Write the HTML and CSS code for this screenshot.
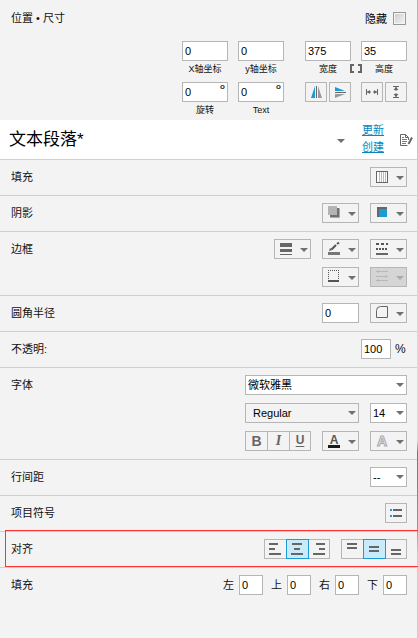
FILE: index.html
```html
<!DOCTYPE html>
<html lang="zh-CN">
<head>
<meta charset="utf-8">
<title>属性</title>
<link rel="stylesheet" href="styles.css">
</head>
<body>
<main class="panel">
  <section class="geometry">
    <header class="geometry-head"><span>位置 • 尺寸</span><label class="hide"><span>隐藏</span><i class="check"></i></label></header>
    <div class="geometry-grid">
      <div class="field"><div class="input w46">0</div><span>X轴坐标</span></div>
      <div class="field"><div class="input w46">0</div><span>y轴坐标</span></div>
      <div class="field gap-left"><div class="input w46">375</div><span>宽度</span></div>
      <div class="field"><div class="input w46">35</div><span>高度</span>
        <svg class="link-icon" width="12" height="9"><path d="M4 1H1V8H4M8 1H11V8H8" fill="none" stroke="#666" stroke-width="2"/></svg></div>
      <div class="field"><div class="input w46">0<b class="deg">o</b></div><span>旋转</span></div>
      <div class="field"><div class="input w46">0<b class="deg">o</b></div><span>Text</span></div>
      <div class="pair gap-left">
        <div class="btn w22"><svg width="20" height="18"><path d="M9 3V15H5Z" fill="#1c9ad6"/><path d="M12 3V15H16Z" fill="#999"/><path d="M10.500 3V15" stroke="#666"/></svg></div>
        <div class="btn w22"><svg width="20" height="18"><path d="M5 4V8H15Z" fill="#1c9ad6"/><path d="M5 11V15L15 11Z" fill="#999"/><path d="M5 9.500H16" stroke="#666"/></svg></div>
      </div>
      <div class="pair">
        <div class="btn w22"><svg width="20" height="18"><path d="M4.500 6V12M15.500 6V12M5 9H9M11 9H15" stroke="#666"/><path d="M5 9L8 7V11ZM15 9L12 7V11Z" fill="#666"/></svg></div>
        <div class="btn w22"><svg width="20" height="18"><path d="M7 3.500H13M7 14.500H13M10 4V8M10 10V14" stroke="#666"/><path d="M10 4L12.500 7H7.500ZM10 14L12.500 11H7.500Z" fill="#666"/></svg></div>
      </div>
    </div>
  </section>

  <section class="style-bar">
    <h1>文本段落*</h1>
    <i class="arrow"></i>
    <div class="links"><a>更新</a><a>创建</a></div>
    <svg class="doc" width="14" height="14"><path d="M8.500 12.500H1.500V1.500H6.500L9.500 4.500V7M6.500 1.500V4.500H9.500" fill="none" stroke="#666"/><path d="M3 4.500H5M3 6.500H8M3 8.500H8M3 10.500H7" stroke="#1c9ad6"/><path d="M13 4.500L9.500 11" stroke="#666" stroke-width="2"/></svg>
  </section>

  <section class="row"><span class="label">填充</span><div class="controls"><div class="line">
    <div class="btn drop"><svg width="20" height="18"><rect x="5.500" y="3.500" width="11" height="11" fill="#fff" stroke="#666"/><path d="M8.500 4V14M10.500 4V14M12.500 4V14M14.500 4V14" stroke="#bbb"/></svg><i class="arrow"></i></div>
  </div></div></section>

  <section class="row"><span class="label">阴影</span><div class="controls"><div class="line">
    <div class="btn drop"><svg width="20" height="18"><rect x="7" y="4" width="10" height="10" rx="1" fill="#aaa"/><rect x="7" y="4" width="9" height="9" fill="#707070"/><rect x="5" y="2" width="9" height="9" fill="#b4b4b4"/></svg><i class="arrow"></i></div>
    <div class="btn drop"><svg width="20" height="18"><path d="M6 3H16V5H8V13H6Z" fill="#666"/><path d="M8 5H16V13H8Z" fill="#1c9ad6"/></svg><i class="arrow"></i></div>
  </div></div></section>

  <section class="row"><span class="label">边框</span><div class="controls">
    <div class="line">
      <div class="btn drop"><svg width="20" height="18"><path d="M5 3H17V7H5ZM5 9H17V12H5ZM5 14H17V15H5Z" fill="#666"/></svg><i class="arrow"></i></div>
      <div class="btn drop"><svg width="20" height="18"><path d="M5 12H17V15H5Z" fill="#777"/><path d="M8.500 9.500L13 5M14 4L16 2.500" stroke="#555" stroke-width="2"/><path d="M6 11L7 8L9 10Z" fill="#555"/></svg><i class="arrow"></i></div>
      <div class="btn drop"><svg width="20" height="18"><path d="M5 4H17" stroke="#555" stroke-width="2" stroke-dasharray="3 2"/><path d="M5 9H17" stroke="#555" stroke-width="2" stroke-dasharray="2 1"/><path d="M5 14H17" stroke="#666" stroke-width="2"/></svg><i class="arrow"></i></div>
    </div>
    <div class="line">
      <div class="btn drop"><svg width="20" height="18"><path d="M5 2.500H16M5.500 4V12M15.500 4V12" stroke="#555" stroke-dasharray="1 1"/><path d="M5 13H16" stroke="#555" stroke-width="2"/></svg><i class="arrow"></i></div>
      <div class="btn drop disabled"><svg width="20" height="18"><path d="M5 3.500H17M5 8.500H17M5 12.500H17" stroke="#b8b8b8"/><path d="M5 3.500L8 2V5ZM17 8.500L14 7V10ZM5 12.500L8 11V14Z" fill="#b8b8b8"/></svg><i class="arrow"></i></div>
    </div>
  </div></section>

  <section class="row"><span class="label">圆角半径</span><div class="controls"><div class="line">
    <div class="input w37">0</div>
    <div class="btn drop"><svg width="20" height="18"><path d="M9.500 2.500H16.500V13.500H5.500V6.500Q5.500 2.500 9.500 2.500Z" fill="none" stroke="#666"/></svg><i class="arrow"></i></div>
  </div></div></section>

  <section class="row"><span class="label">不透明:</span><div class="controls"><div class="line opacity">
    <div class="input w30">100</div><span class="percent">%</span>
  </div></div></section>

  <section class="row"><span class="label">字体</span><div class="controls">
    <div class="line"><div class="select family">微软雅黑<i class="arrow"></i></div></div>
    <div class="line"><div class="select weight">Regular<i class="arrow"></i></div><div class="select w37">14<i class="arrow"></i></div></div>
    <div class="line">
      <div class="group"><div class="seg bold">B</div><div class="seg italic">I</div><div class="seg under">U</div></div>
      <div class="btn drop"><span class="color-a">A</span><i class="arrow"></i></div>
      <div class="btn drop"><span class="outline-a">A</span><i class="arrow"></i></div>
    </div>
  </div></section>

  <section class="row"><span class="label">行间距</span><div class="controls"><div class="line"><div class="select w37"><span class="dashes">--</span><i class="arrow"></i></div></div></div></section>

  <section class="row"><span class="label">项目符号</span><div class="controls"><div class="line">
    <div class="btn w22"><svg width="20" height="18"><path d="M4 6H6M4 12H6" stroke="#1c9ad6" stroke-width="2"/><path d="M7 6H16M7 12H16" stroke="#666" stroke-width="2"/></svg></div>
  </div></div></section>

  <section class="row align"><span class="label">对齐</span><div class="controls"><div class="line">
    <div class="group">
      <div class="seg"><svg width="20" height="18"><path d="M4 4H13M4 9H10M4 14H16" stroke="#666" stroke-width="2"/></svg></div>
      <div class="seg active"><svg width="20" height="18"><path d="M5 4H15M7 9H13M4 14H16" stroke="#666" stroke-width="2"/></svg></div>
      <div class="seg"><svg width="20" height="18"><path d="M7 4H16M10 9H16M4 14H16" stroke="#666" stroke-width="2"/></svg></div>
    </div>
    <div class="group">
      <div class="seg"><svg width="20" height="18"><path d="M5 4H15M5 8H15" stroke="#666" stroke-width="2"/></svg></div>
      <div class="seg active"><svg width="20" height="18"><path d="M5 7H15M5 11H15" stroke="#666" stroke-width="2"/></svg></div>
      <div class="seg"><svg width="20" height="18"><path d="M5 10H15M5 14H15" stroke="#666" stroke-width="2"/></svg></div>
    </div>
  </div></div></section>

  <section class="row last"><span class="label">填充</span><div class="controls"><div class="line padding-line">
    <span>左</span><div class="input w24">0</div><span>上</span><div class="input w24">0</div><span>右</span><div class="input w24">0</div><span>下</span><div class="input w24">0</div>
  </div></div></section>
</main>
</body>
</html>
```

FILE: styles.css
```css
* { box-sizing: border-box; }
body {
  margin: 0;
  background: #f3f3f3;
  color: #111;
  font: 11px/18px "Liberation Sans", "Noto Sans CJK SC", sans-serif;
}
.panel {
  width: 418px;
  height: 638px;
  overflow: hidden;
  padding-right: 1px;
  background: linear-gradient(#8fbfe0, #b9d8e6 35%, #d8ddd5 60%, #d8ddd5 69%, #64788a 71%, #8b9ba0 83%, #c5d3ce 87%, #b5d5df) right / 1px 100% no-repeat;
}
svg { display: block; flex: none; }

.geometry { height: 120px; padding: 9px 10px 0 11px; }
.geometry-head { display: flex; justify-content: space-between; height: 32px; }
.hide { display: flex; gap: 6px; padding-top: 1px; color: #000; }
.check {
  width: 13px; height: 13px; margin: 2px 1px 0 0;
  border: 1px solid #999;
  background: linear-gradient(135deg, #ccc, #f5f5f5);
  box-shadow: inset 0 0 0 1px #f5f5f5;
}
.geometry-grid {
  display: grid;
  grid-template-columns: 46px 46px 57px 46px;
  grid-auto-rows: 41px;
  column-gap: 10px;
  justify-content: end;
}
.field { position: relative; display: flex; flex-direction: column; }
.field > span { width: 46px; text-align: center; font-size: 9px; line-height: 17px; white-space: nowrap; }
.gap-left { padding-left: 11px; }
.link-icon { position: absolute; left: -11px; top: 23px; }
.pair { display: flex; gap: 2px; }

.input, .btn, .select {
  height: 20px;
  border: 1px solid #b6b6b6;
  flex: none;
}
.input { position: relative; background: #fff; padding-left: 2px; color: #000; }
.w22 { width: 22px; }
.w24 { width: 24px; }
.w30 { width: 30px; }
.w37 { width: 37px; }
.w46 { width: 46px; }
.deg { position: absolute; right: 2px; top: -5px; color: #233; font-size: 8px; }

.arrow {
  width: 8px; height: 4px; flex: none;
  background: #707070;
  clip-path: polygon(0 0, 100% 0, 50% 100%);
}
.btn { display: flex; align-items: center; }
.drop { width: 37px; justify-content: space-between; padding-right: 2px; }
.drop .arrow { margin-top: 2px; }
.disabled { background: #d5d5d5; }
.disabled .arrow { background: #aaa; }

.style-bar {
  display: flex; align-items: center;
  height: 40px; padding: 0 3px 0 9px;
  background: #fff; border-bottom: 1px solid #d0d0d0;
}
.style-bar h1 { margin: 0; width: 328px; font-size: 17px; font-weight: 400; line-height: 24px; color: #000; }
.style-bar .arrow { margin-top: 3px; }
.links { display: flex; flex-direction: column; margin-left: 17px; width: 37px; padding-bottom: 1px; }
.links a { color: #0c85ba; line-height: 17px; text-decoration: underline; }
.doc { margin-top: 1px; }

.row {
  display: flex; justify-content: space-between;
  padding: 7px 10px 8px 11px;
  border-bottom: 1px solid #d0d0d0;
}
.last { border-bottom: 0; }
.label { line-height: 21px; }
.row > .label { height: 20px; }
.controls { display: flex; flex-direction: column; gap: 8px; }
.line { display: flex; gap: 11px; justify-content: flex-end; }
.line:first-child { height: 20px; }
.opacity { gap: 4px; }
.percent { width: 12px; line-height: 21px; font-size: 12px; }

.select {
  display: flex; align-items: center; justify-content: space-between;
  background: #fff; padding: 0 2px; color: #000;
}
.family { width: 162px; }
.weight { width: 114px; background: #f3f3f3; padding-left: 7px; }
.group { display: flex; width: 66px; }
.seg {
  width: 23px; height: 20px; margin-right: -1px; flex: none;
  border: 1px solid #b6b6b6;
  color: #666; text-align: center;
}
.seg:last-child { width: 22px; margin-right: 0; }
.active { position: relative; border-color: #1c9ad6; background: #c9eaf8; }
.bold { font-size: 14px; font-weight: 700; }
.italic { font: italic 700 14px/18px "Liberation Serif", serif; }
.under { font-size: 12px; font-weight: 700; line-height: 16px; text-decoration: underline; text-underline-offset: 2px; }
.color-a {
  margin-left: 5px; width: 12px; height: 13px;
  border-bottom: 3px solid #1a1a1a;
  color: #555; font-size: 12px; font-weight: 700; line-height: 10px; text-align: center;
}
.outline-a {
  margin-left: 5px; width: 12px;
  color: #f3f3f3; font-size: 14px; font-weight: 700; text-align: center;
  -webkit-text-stroke: 1px #aaa;
}

.align { position: relative; }
.align::after {
  content: "";
  position: absolute; left: 5px; top: -2px;
  width: 413px; height: 35px;
  border: 1px solid #f33;
}
.padding-line { gap: 5px; line-height: 21px; }
.padding-line .input { line-height: 18px; }
.padding-line .input + span { margin-left: 3px; }
```
